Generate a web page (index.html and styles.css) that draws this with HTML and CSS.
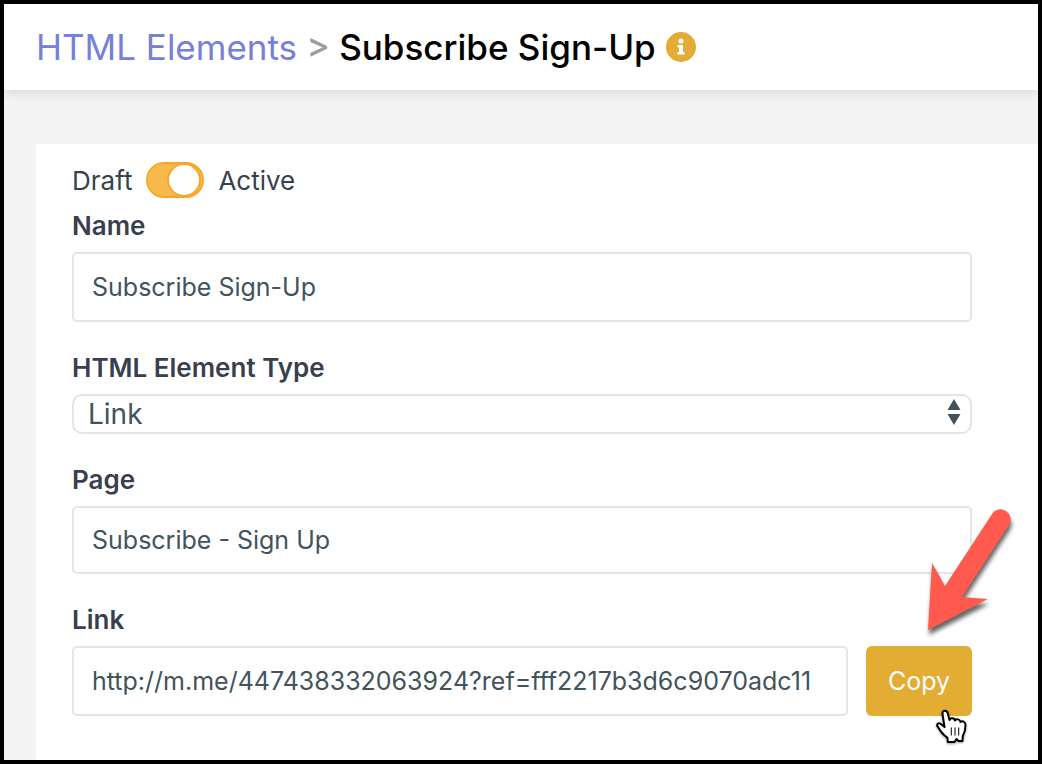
FILE: index.html
```
<!DOCTYPE html>
<html lang="en">
<head>
  <meta charset="UTF-8">
  <meta name="viewport" content="width=device-width, initial-scale=1.0">
  <title>HTML Elements - Subscribe Sign-Up</title>
  <link rel="stylesheet" href="styles.css">
</head>
<body>
  <header class="page-header">
    <h1>
      <a href="#">HTML Elements</a>
      <span class="separator">&gt;</span>
      <span>Subscribe Sign-Up</span>
    </h1>
    <svg class="info" viewBox="0 0 30 30" aria-label="Info">
      <circle cx="15" cy="15" r="15"/>
      <circle class="mark" cx="15" cy="9" r="2.600"/>
      <path class="mark" d="M11.500 13h5.500v7h1.500v2.500h-7V20H13v-4.500h-1.500z"/>
    </svg>
  </header>

  <main class="panel">
    <form>
      <div class="status">
        <span>Draft</span>
        <input type="checkbox" class="toggle" id="active" checked>
        <label for="active">Active</label>
      </div>

      <div class="field">
        <label for="name">Name</label>
        <input type="text" id="name" value="Subscribe Sign-Up">
      </div>

      <div class="field">
        <label for="type">HTML Element Type</label>
        <div class="select">
          <select id="type">
            <option>Link</option>
          </select>
          <svg class="arrows" viewBox="0 0 14 26"><path d="M7 0l6.500 11H.5zM.5 15h13L7 26z"/></svg>
        </div>
      </div>

      <div class="field">
        <label for="page">Page</label>
        <input type="text" id="page" value="Subscribe - Sign Up">
      </div>

      <div class="field">
        <label for="link">Link</label>
        <div class="link-row">
          <input type="text" id="link" value="http://m.me/447438332063924?ref=fff2217b3d6c9070adc11">
          <div class="copy">
            <button type="button">Copy</button>
            <svg class="pointer" viewBox="0 0 110 150">
              <path d="M12 130L16 63L29 86L76 14A10 10 0 0 1 93 25L46 97L72 99Z"/>
            </svg>
            <svg class="hand" viewBox="0 0 34 38">
              <path d="M7.500 6C7 1.800 12.200 1.800 12.800 5.500L14.500 12C15 9.500 19.500 9.500 20 12.500C21 10.500 25 11 25.500 14C27 12.500 30.500 13.500 30.500 17C30.500 23 29.500 25 27.800 28L27.500 33L23.500 33L21.500 31L19.500 34H12.800L12.500 30C9 27 6.500 25 5 22L2.300 18C1.500 15 4.500 14.500 6.500 16.500L9.500 19Z"/>
              <path class="lines" d="M16.300 19.500v8M20 19.500v8M23.700 19.500v8"/>
            </svg>
          </div>
        </div>
      </div>
    </form>
  </main>
</body>
</html>
```

FILE: styles.css
```
* { box-sizing: border-box; }
body {
  margin: 0;
  min-height: 100vh;
  border: 4px solid #000;
  background-color: #f4f4f4;
  font-family: Inter, "Liberation Sans", sans-serif;
  font-size: 26px;
  color: #3a3f4e;
  display: flex;
  flex-direction: column;
}
.page-header {
  display: flex;
  align-items: center;
  gap: 10px;
  height: 86px;
  padding: 0 32px;
  background-color: #fff;
  box-shadow: 0 2px 12px rgba(0, 0, 0, 0.13);
  clip-path: inset(0 0 -20px 0);
}
h1 {
  margin: 0;
  font-size: 35px;
  font-weight: 500;
  color: #000;
}
h1 a { color: #7680d8; font-weight: 400; text-decoration: none; }
.separator { color: #9b9ca6; }
.info { width: 30px; height: 30px; fill: #e3ac32; }
.info .mark { fill: #fff; }
.panel {
  flex: 1;
  margin: 54px 0 0 32px;
  padding: 18px 66px 44px 36px;
  background-color: #fff;
}
.status {
  display: flex;
  align-items: center;
  gap: 14px;
  height: 36px;
  margin-bottom: 10px;
}
.toggle {
  appearance: none;
  display: flex;
  justify-content: flex-end;
  align-items: center;
  width: 58px;
  height: 36px;
  margin: 0;
  padding: 0 1px;
  border: 2px solid #f9a72b;
  border-radius: 18px;
  background-color: #f9ba4d;
}
.toggle::before {
  content: "";
  width: 30px;
  height: 30px;
  border: 2px solid #f9a72b;
  border-radius: 50%;
  background-color: #fff;
}
.toggle:not(:checked) { justify-content: flex-start; background-color: #ddd; }
.field { margin-bottom: 28px; }
.field:last-child { margin-bottom: 0; }
.field > label {
  display: block;
  margin-bottom: 8px;
  line-height: 36px;
  font-weight: 600;
}
input[type="text"], select {
  display: block;
  width: 100%;
  border: 2px solid #e4e4ea;
  background-color: #fff;
  color: #42535c;
  font-family: inherit;
}
input[type="text"] {
  height: 70px;
  padding: 0 18px;
  border-radius: 5px;
  font-size: 25px;
}
#page { height: 68px; }
.select { position: relative; }
select {
  appearance: none;
  height: 40px;
  padding: 0 14px;
  border-radius: 10px;
  font-size: 28px;
}
.arrows {
  position: absolute;
  top: 5px;
  right: 11px;
  width: 14px;
  height: 26px;
  fill: #42535c;
  pointer-events: none;
}
.link-row { display: flex; gap: 18px; }
.link-row input { flex: 1; min-width: 0; }
.copy { position: relative; }
button {
  width: 106px;
  height: 70px;
  border: none;
  border-radius: 6px;
  background-color: #e3ac32;
  color: #fff;
  font-family: inherit;
  font-size: 25px;
  cursor: pointer;
}
.pointer {
  position: absolute;
  top: -146px;
  left: 50px;
  width: 110px;
  height: 150px;
  fill: #ff5a4d;
  filter: drop-shadow(1px 5px 2px rgba(0, 0, 0, 0.6));
  pointer-events: none;
}
.hand {
  position: absolute;
  top: 62px;
  left: 69px;
  width: 34px;
  height: 38px;
  fill: #fff;
  stroke: #000;
  stroke-width: 2;
  stroke-linejoin: round;
  filter: drop-shadow(0 1px 1px rgba(0, 0, 0, 0.4));
  pointer-events: none;
}
.hand .lines { stroke-width: 1; }
```
